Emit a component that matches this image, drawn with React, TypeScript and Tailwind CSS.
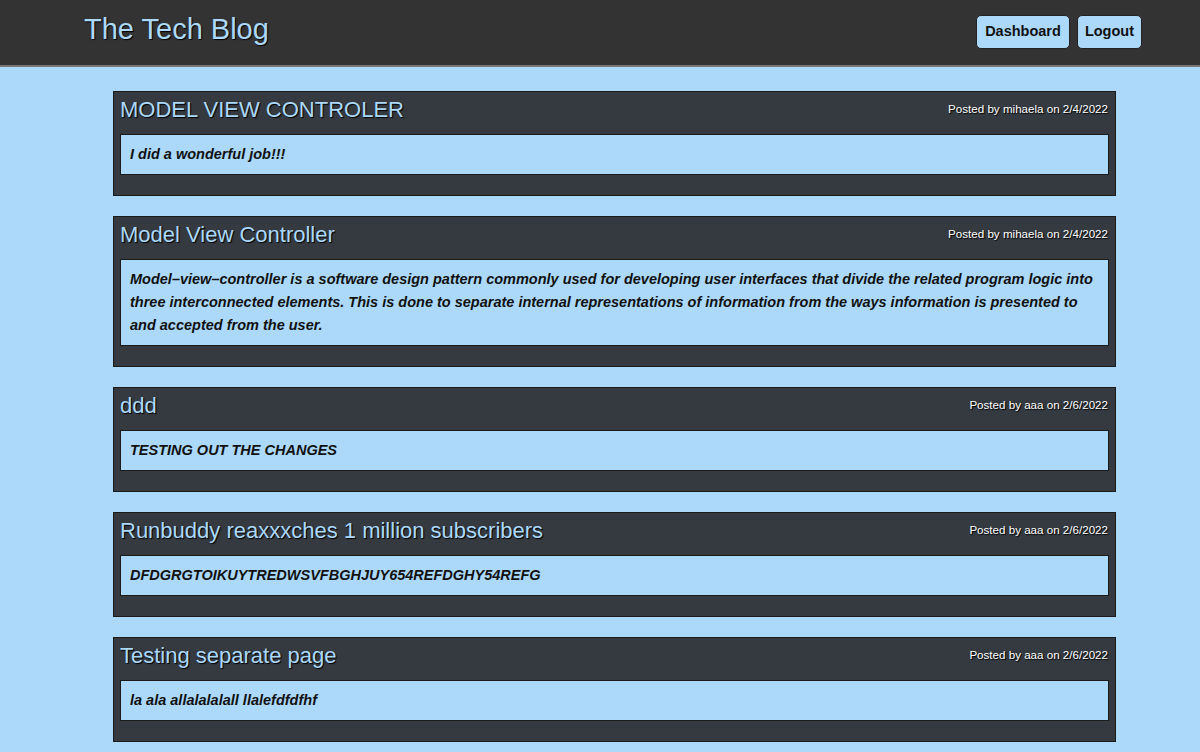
import React from "react"

const posts = [
  { title: "MODEL VIEW CONTROLER", author: "mihaela", date: "2/4/2022", body: "I did a wonderful job!!!" },
  {
    title: "Model View Controller",
    author: "mihaela",
    date: "2/4/2022",
    body:
      "Model–view–controller is a software design pattern commonly used for developing user interfaces that divide the related program logic into\nthree interconnected elements. This is done to separate internal representations of information from the ways information is presented to\nand accepted from the user.",
  },
  { title: "ddd", author: "aaa", date: "2/6/2022", body: "TESTING OUT THE CHANGES" },
  { title: "Runbuddy reaxxxches 1 million subscribers", author: "aaa", date: "2/6/2022", body: "DFDGRGTOIKUYTREDWSVFBGHJUY654REFDGHY54REFG" },
  { title: "Testing separate page", author: "aaa", date: "2/6/2022", body: "la ala allalalalall llalefdfdfhf" },
]

const shadow = "[text-shadow:1px_1px_1px_#000]"

export default function App() {
  return (
    <div className="min-h-screen bg-[#acd9fa] font-['Liberation_Sans',Arial,sans-serif]">
      {/* header */}
      <header className="h-[67px] bg-[#333333] border-b-2 border-[#777]">
        <div className="flex items-center justify-between h-full pl-[84px] pr-[58px]">
          <h1 className={`text-[29px] leading-none text-[#acd9fa] -mt-[7px] ${shadow}`}>The Tech Blog</h1>
          <nav className="flex gap-[7px] -mt-[2px]">
            <button className="h-[34px] px-[8px] rounded-[5px] bg-[#acd9fa] border border-[#222] text-[14.5px] font-bold text-[#111]">
              Dashboard
            </button>
            <button className="h-[34px] px-[7px] rounded-[5px] bg-[#acd9fa] border border-[#222] text-[14.5px] font-bold text-[#111]">
              Logout
            </button>
          </nav>
        </div>
      </header>

      {/* posts */}
      <main className="ml-[113px] w-[1003px] pt-[24px] flex flex-col gap-[20px] pb-[20px]">
        {posts.map((p) => (
          <article key={p.title} className="bg-[#343a40] border border-[#1b1b1b] px-[6px] pt-[4px] pb-[20px]">
            <div className="flex justify-between items-start h-[38px]">
              <h2 className={`text-[22px] leading-[28px] text-[#acd9fa] ${shadow}`}>{p.title}</h2>
              <span className={`mt-[5px] mr-[1px] text-[11.6px] leading-[16px] text-white ${shadow}`}>
                Posted by {p.author} on {p.date}
              </span>
            </div>
            <div className="bg-[#acd9fa] border border-[#1b1b1b] px-[9px] py-[8px]">
              <p className="text-[14.5px] leading-[23px] font-bold italic text-[#111] whitespace-pre-line">{p.body}</p>
            </div>
          </article>
        ))}
      </main>
    </div>
  )
}
